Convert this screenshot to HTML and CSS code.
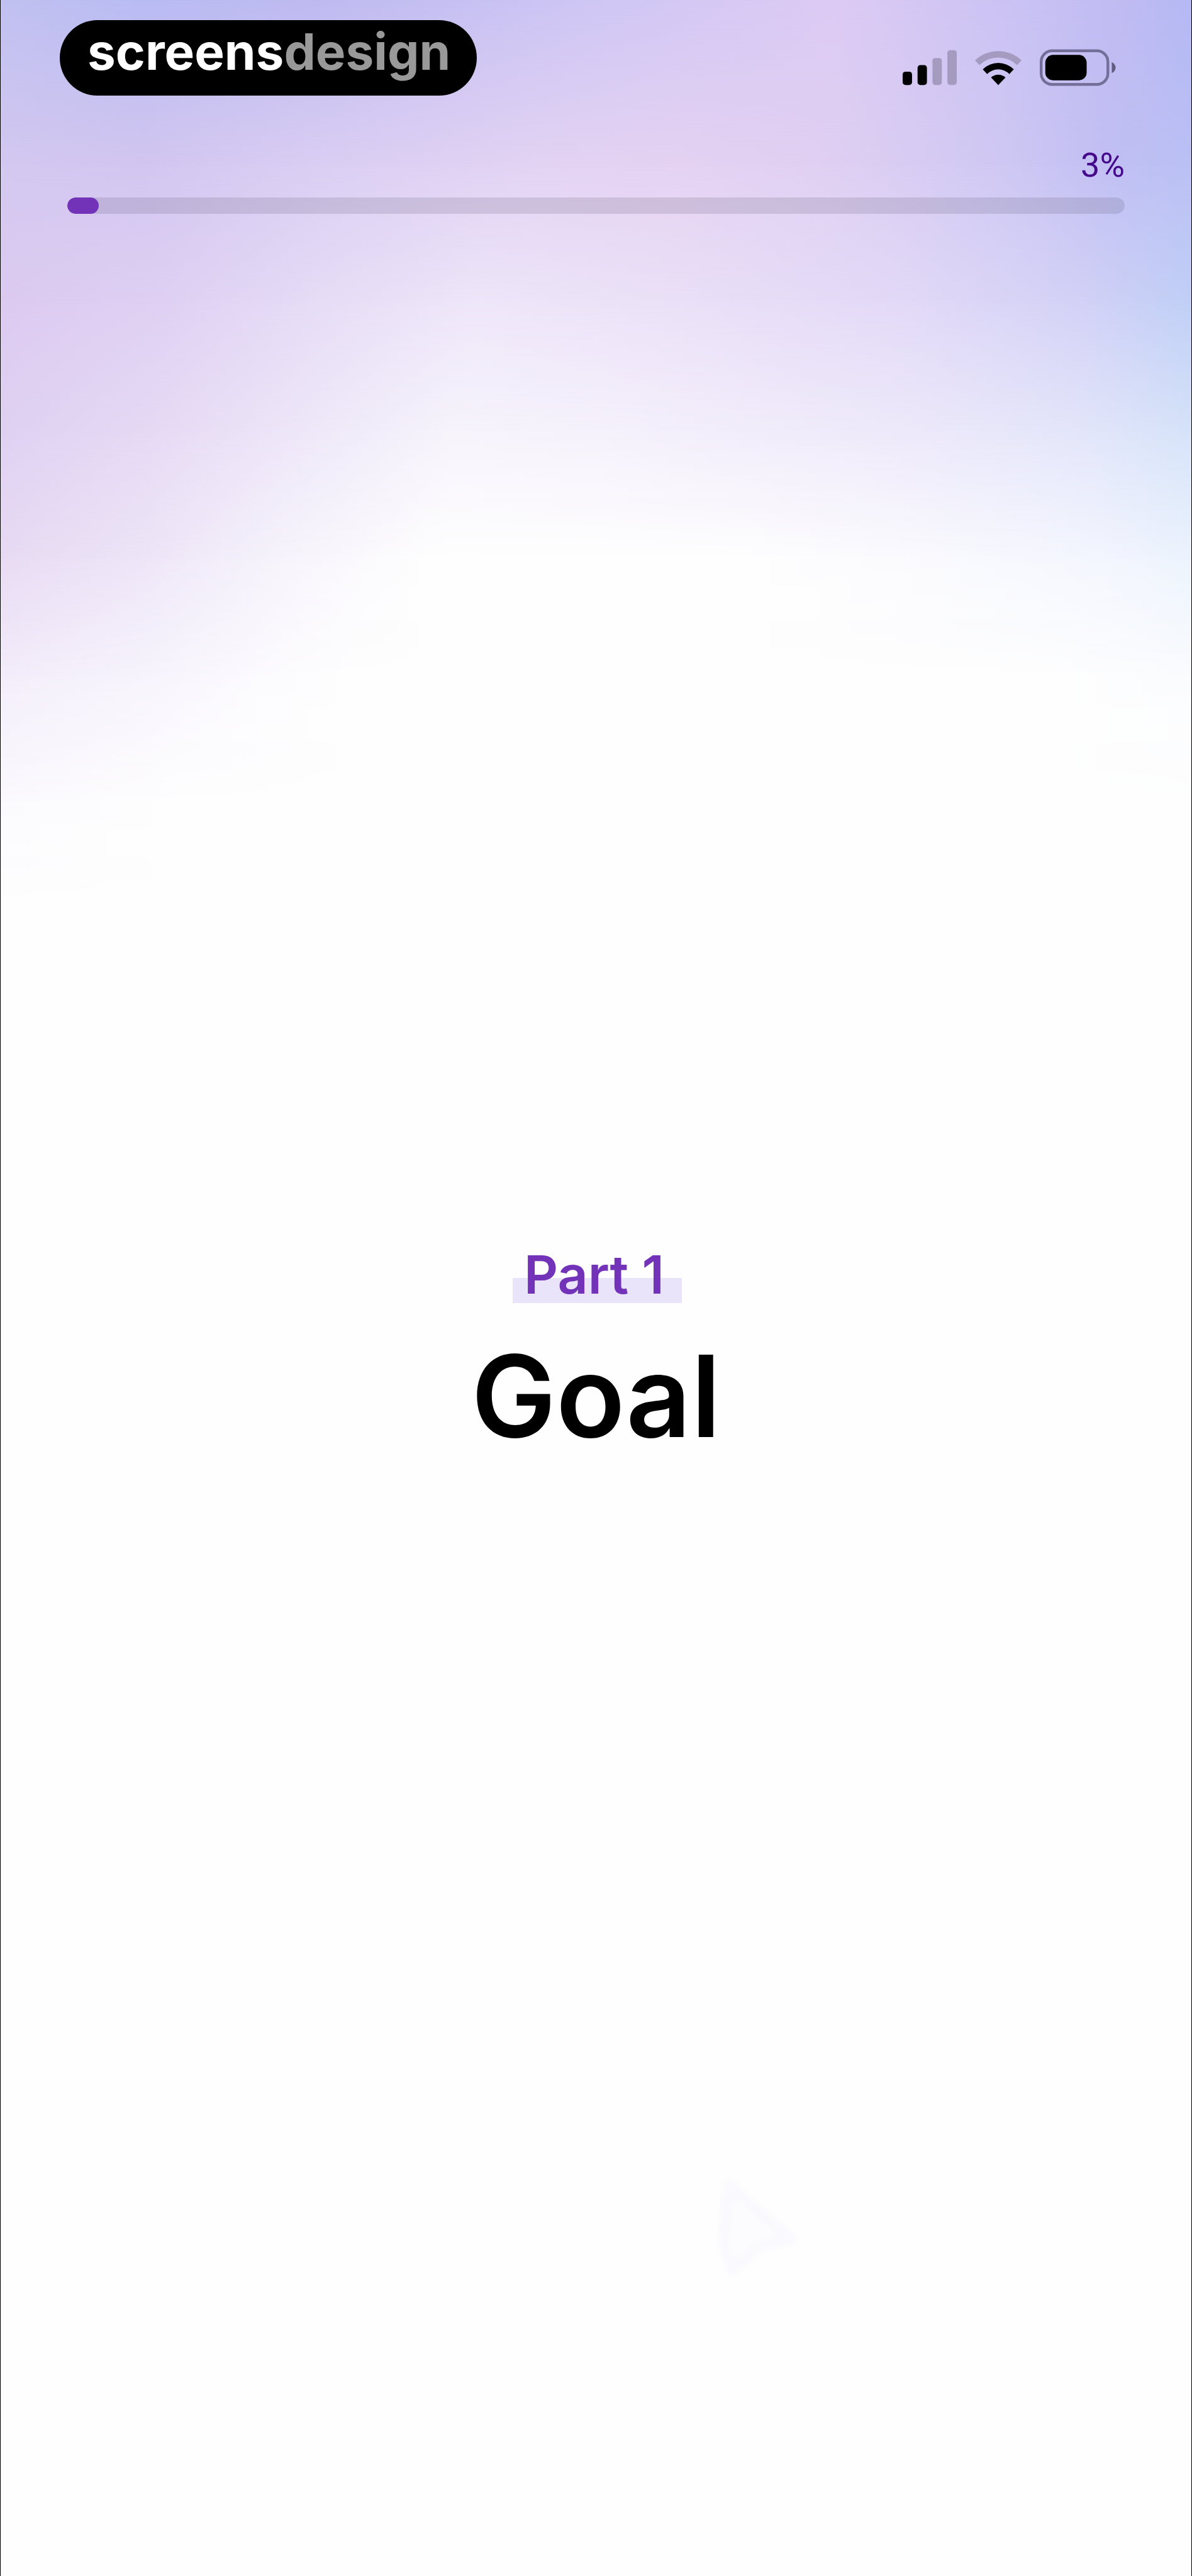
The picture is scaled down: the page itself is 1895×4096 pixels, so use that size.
FILE: index.html
```html
<!DOCTYPE html>
<html lang="en">
<head>
  <meta charset="UTF-8">
  <meta name="viewport" content="width=device-width, initial-scale=1">
  <title>Part 1 - Goal</title>
  <link rel="stylesheet" href="styles.css">
</head>
<body>
  <div class="screen">
    <!-- colour wash, each layer fades into the one below it -->
    <div class="wash" aria-hidden="true">
      <div class="layer layer6"></div>
      <div class="layer layer5"></div>
      <div class="layer layer4"></div>
      <div class="layer layer3"></div>
      <div class="layer layer2"></div>
      <div class="layer layer1"></div>
      <div class="layer layer0"></div>
    </div>

    <header class="top">
      <div class="statusbar">
        <div class="brand"><span>screens</span><span class="dim">design</span></div>
        <div class="status">
          <svg width="86" height="59" viewBox="0 0 98 67" aria-hidden="true">
            <rect x="0" y="41" width="17" height="24" rx="5"/>
            <rect x="27" y="29" width="17" height="36" rx="5"/>
            <rect x="54" y="16" width="17" height="49" rx="5" fill="#a59bc1"/>
            <rect x="81" y="2" width="17" height="63" rx="5" fill="#a59bc1"/>
          </svg>
          <svg width="74" height="59" viewBox="0 0 84 67" aria-hidden="true">
            <path d="M0 20.500 A61 61 0 0 1 84 20.500 L76 29 A49 49 0 0 0 8 29 Z" fill="#a59bc1"/>
            <path d="M14 36.500 A40 40 0 0 1 70 36.500 L62 45 A28 28 0 0 0 22 45 Z"/>
            <path d="M29 51.500 A19 19 0 0 1 55 51.500 L42 65 Z"/>
          </svg>
          <svg width="121" height="59" viewBox="0 0 138 67" aria-hidden="true">
            <rect x="2.500" y="3" width="121" height="61" rx="20" fill="none" stroke="#746f99" stroke-width="5"/>
            <rect x="10" y="10.500" width="75" height="46" rx="14"/>
            <path d="M130.500 23.500 Q137.500 27 137.500 33.500 T130.500 43.500 Z" fill="#625d80"/>
          </svg>
        </div>
      </div>
      <div class="progress">
        <label class="percent" for="progress">3%</label>
        <progress class="bar" id="progress" value="3" max="100">3%</progress>
      </div>
    </header>

    <main class="intro">
      <p class="part">Part 1</p>
      <h1 class="title">Goal</h1>
    </main>

    <svg class="ghost" viewBox="0 0 123 154" aria-hidden="true">
      <path d="M20 12 L114 94 L64 106 L26 142 L12 100 Z"/>
    </svg>
  </div>
</body>
</html>
```

FILE: styles.css
```css
* { box-sizing: border-box; }

body {
  margin: 0;
  background: #fefefe;
  color: #000;
  font-family: Inter, "Liberation Sans", sans-serif;
}

.screen {
  position: relative;
  display: flex;
  flex-direction: column;
  min-height: 100vh;
  border-left: 1px solid #000;
  border-right: 1px solid #000;
  overflow: hidden;
}

/* background wash */
.wash {
  position: absolute;
  top: 0;
  left: 0;
  right: 0;
  height: 1440px;
}
.layer {
  position: absolute;
  top: 0;
  left: 0;
  right: 0;
}
.layer0 {
  height: 263px;
  background: linear-gradient(90deg, #c0c0f0, #b8bbf2 12%, #bebaf0 27%, #cec6f4 50%, #dccaf3 70%, #cac2f3 85%, #bdbaf2 96%, #b4b8f4);
  mask-image: linear-gradient(#000, transparent);
}
.layer1 {
  height: 480px;
  background: linear-gradient(90deg, #d3c8f0, #d2c6f0 12%, #dacef3 27%, #e3d3f3 45%, #e5d2f2 57%, #dfcff2 70%, #cfc8f3 84%, #c1bff3 93%, #bac0f4);
  mask-image: linear-gradient(#000 55%, transparent);
}
.layer2 {
  height: 690px;
  background: linear-gradient(90deg, #dccaf0, #dfd0f3 14%, #e6ddf6 27%, #eee6f9 40%, #eae0f7 57%, #e2d9f7 76%, #d2d1f6 91%, #c0cff6);
  mask-image: linear-gradient(#000 70%, transparent);
}
.layer3 {
  height: 890px;
  background: linear-gradient(90deg, #dfd1f2, #e6d9f4 12%, #efe9f9 27%, #f7f4fc 38%, #f6f2fc 50%, #f3eefb 60%, #eee9fa 76%, #e3e6fa 91%, #d6e3f9);
  mask-image: linear-gradient(#000 78%, transparent);
}
.layer4 {
  height: 1080px;
  background: linear-gradient(90deg, #e8daf3, #ede5f7 12%, #f7f4fc 24%, #fefefe 36%, #fefefe 62%, #fafafe 78%, #f4f6fe 92%, #ecf3fd);
  mask-image: linear-gradient(#000 82%, transparent);
}
.layer5 {
  height: 1280px;
  background: linear-gradient(90deg, #f3edfa, #f7f4fd 12%, #fcfbfe 22%, #fefefe 30%, #fefefe 88%, #fbfcfe);
  mask-image: linear-gradient(#000 84%, transparent);
}
.layer6 {
  height: 1440px;
  background: linear-gradient(90deg, #fbfafe, #fefefe 15%);
  mask-image: linear-gradient(#000 89%, transparent);
}

/* header */
.top {
  position: relative;
  padding: 32px 106px 0;
}
.statusbar {
  display: flex;
  align-items: center;
  justify-content: space-between;
  margin: 0 14px 0 -12px;
}
.brand {
  height: 120px;
  padding: 0 42px 0 44px;
  border-radius: 60px;
  background: #000;
  color: #fff;
  font-size: 80px;
  font-weight: 700;
  line-height: 100px;
}
.dim { color: #999; }
.status {
  display: flex;
  gap: 29px;
  padding-top: 30px;
}

.progress {
  display: flex;
  flex-direction: column;
  gap: 20px;
  padding-top: 80px;
}
.percent {
  align-self: flex-end;
  color: #450a8c;
  font-family: Roboto, "Liberation Sans", sans-serif;
  font-size: 54px;
  line-height: 62px;
}
.bar {
  appearance: none;
  display: block;
  width: 100%;
  height: 26px;
  border: 0;
  border-radius: 13px;
  background: transparent;
  overflow: hidden;
}
.bar::-webkit-progress-bar {
  border-radius: 13px;
  background: rgba(60, 50, 80, .14);
}
.bar::-webkit-progress-value {
  border-radius: 13px;
  background: #7233b9;
}

/* section intro */
.intro {
  position: relative;
  flex: 1;
  display: flex;
  flex-direction: column;
  align-items: center;
  justify-content: center;
  gap: 40px;
  padding-bottom: 136px;
}
.part {
  margin: 0 0 0 4px;
  padding: 10px 28px 0 18px;
  background: linear-gradient(transparent 60px, #e9e4f9 60px);
  color: #7233b9;
  font-size: 84px;
  font-weight: 600;
  line-height: 90px;
}
.title {
  margin: 0;
  font-size: 180px;
  font-weight: 600;
  line-height: 216px;
}

.ghost {
  position: absolute;
  left: 60%;
  top: 84.5%;
  width: 130px;
  fill: #fcfcfe;
  stroke: #f9f9fe;
  stroke-width: 14px;
  stroke-linejoin: round;
  filter: blur(4px);
}
```
